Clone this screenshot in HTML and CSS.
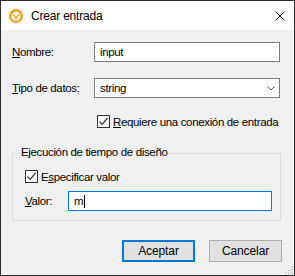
FILE: index.html
```html
<!DOCTYPE html>
<html lang="es">
<head>
    <meta charset="UTF-8">
    <title>Crear entrada</title>
    <link rel="stylesheet" href="styles.css">
</head>
<body>
    <div class="window">
        <div class="titlebar">
            <svg class="app-icon" width="14" height="14" viewBox="0 0 14 14">
                <circle cx="7" cy="7" r="7" fill="#f5a01a"/>
                <circle cx="7" cy="7.3" r="4.6" fill="#ffffff"/>
                <path d="M3.6 4.6 L7 7.6 L10.4 4.6 L10.4 6 L7.8 8.4 L7.8 10.8 L6.2 10.8 L6.2 8.4 L3.6 6 Z" fill="#f5a01a"/>
            </svg>
            <span class="title">Crear entrada</span>
            <svg class="close" width="10" height="10" viewBox="0 0 10 10">
                <path d="M0.5 0.5 L9.5 9.5 M9.5 0.5 L0.5 9.5" stroke="#000" stroke-width="1"/>
            </svg>
        </div>

        <div class="content">
            <div class="row row-name">
                <label class="label"><u>N</u>ombre:</label>
                <div class="field">input</div>
            </div>

            <div class="row row-type">
                <label class="label"><u>T</u>ipo de datos:</label>
                <div class="field select">
                    <span>string</span>
                    <svg width="8" height="5" viewBox="0 0 8 5">
                        <path d="M0.5 0.5 L4 4 L7.5 0.5" fill="none" stroke="#555" stroke-width="1"/>
                    </svg>
                </div>
            </div>

            <div class="row row-check">
                <span class="checkbox">
                    <svg width="11" height="11" viewBox="0 0 11 11">
                        <path d="M1.5 5.5 L4.2 8.3 L9.5 2" fill="none" stroke="#333" stroke-width="1.2"/>
                    </svg>
                </span>
                <span><u>R</u>equiere una conexión de entrada</span>
            </div>

            <div class="group">
                <span class="group-title">Ejecución de tiempo de diseño</span>
                <div class="row group-check">
                    <span class="checkbox">
                        <svg width="11" height="11" viewBox="0 0 11 11">
                            <path d="M1.5 5.5 L4.2 8.3 L9.5 2" fill="none" stroke="#333" stroke-width="1.2"/>
                        </svg>
                    </span>
                    <span>E<u>s</u>pecificar valor</span>
                </div>
                <div class="row group-value">
                    <label class="label short"><u>V</u>alor:</label>
                    <div class="field focused">m<span class="caret"></span></div>
                </div>
            </div>

            <div class="buttons">
                <button class="btn default">Aceptar</button>
                <button class="btn">Cancelar</button>
            </div>

            <svg class="grip" width="10" height="10" viewBox="0 0 10 10">
                <path d="M9 1 L1 9 M9 4 L4 9 M9 7 L7 9" stroke="#a0a0a0" stroke-width="1" stroke-dasharray="1 1"/>
            </svg>
        </div>
    </div>
</body>
</html>
```

FILE: styles.css
```css
* {
    margin: 0;
    padding: 0;
    box-sizing: border-box;
}

body {
    font-family: 'Liberation Sans', Arial, sans-serif;
    font-size: 11.5px;
    letter-spacing: -0.35px;
    color: #000000;
    background: #ffffff;
    white-space: nowrap;
}

.window {
    width: 295px;
    height: 276px;
    border: 1px solid #2b2b2b;
    display: flex;
    flex-direction: column;
}

.titlebar {
    height: 29px;
    background: #ffffff;
    display: flex;
    align-items: center;
    padding-left: 8px;
    font-size: 12px;
    letter-spacing: -0.2px;
}

.app-icon {
    margin-right: 8px;
}

.title {
    flex: 1;
}

.close {
    margin-right: 9px;
}

.content {
    flex: 1;
    background: #f0f0f0;
    display: flex;
    flex-direction: column;
    padding: 0 13px 0 11px;
    position: relative;
}

.row {
    display: flex;
    align-items: center;
}

.label {
    width: 82px;
    flex-shrink: 0;
}

.label.short {
    width: 43px;
}

u {
    text-decoration: underline;
    text-underline-offset: 1px;
}

.field {
    flex: 1;
    height: 20px;
    background: #ffffff;
    border: 1px solid #7a7a7a;
    padding-left: 5px;
    display: flex;
    align-items: center;
    margin-right: 1px;
}

.field.focused {
    border-color: #0078d7;
    margin-right: 8px;
}

.caret {
    width: 1px;
    height: 13px;
    background: #000000;
    margin-left: 1px;
}

.select {
    justify-content: space-between;
    padding-right: 4px;
}

.row-name {
    margin-top: 12px;
}

.row-type {
    margin-top: 16px;
}

.row-check {
    margin-top: 17px;
    padding-left: 85px;
    height: 13px;
}

.checkbox {
    width: 13px;
    height: 13px;
    flex-shrink: 0;
    border: 1px solid #333333;
    background: #ffffff;
    display: flex;
    align-items: center;
    justify-content: center;
    margin-right: 3px;
}

.group {
    margin-top: 25px;
    border: 1px solid #dcdcdc;
    position: relative;
    padding: 16px 0 9px 12px;
}

.group-title {
    position: absolute;
    top: -8px;
    left: 7px;
    background: #f0f0f0;
    padding: 0 1px;
}

.group-check {
    height: 13px;
}

.group-value {
    margin-top: 8px;
}

.buttons {
    margin-top: 19px;
    display: flex;
    justify-content: flex-end;
    gap: 14px;
    margin-right: -1px;
}

.btn {
    width: 73px;
    height: 22px;
    font-family: inherit;
    font-size: 12px;
    letter-spacing: -0.1px;
    color: #000000;
    background: #e1e1e1;
    border: 1px solid #adadad;
}

.btn.default {
    border: 2px solid #0078d7;
}

.grip {
    position: absolute;
    right: 0;
    bottom: 0;
}
```
